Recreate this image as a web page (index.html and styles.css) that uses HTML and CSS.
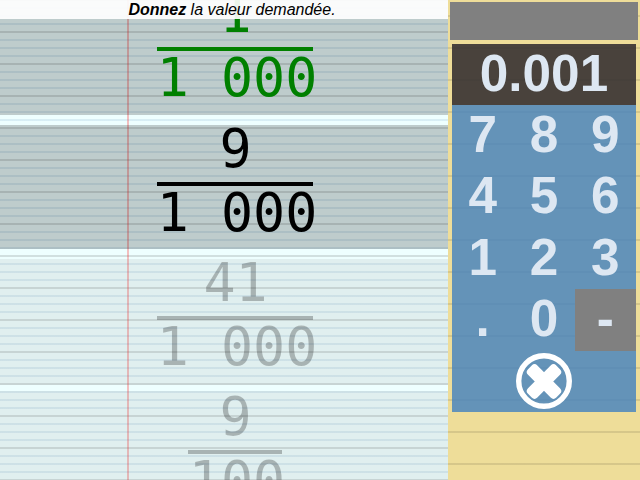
FILE: index.html
```html
<!DOCTYPE html>
<html lang="fr">
<head>
<meta charset="utf-8">
<title>Calcul</title>
<link rel="stylesheet" href="styles.css">
</head>
<body>
<main class="app">
  <section class="sheet">
    <header class="prompt"><b>Donnez</b>&nbsp;la valeur demandée.</header>
    <div class="cards">
      <article class="card first done"><div class="fraction"><span class="num">1</span><span class="bar"></span><span class="den">1 000</span></div></article>
      <article class="card second active"><div class="fraction"><span class="num">9</span><span class="bar"></span><span class="den">1 000</span></div></article>
      <article class="card third"><div class="fraction"><span class="num">41</span><span class="bar"></span><span class="den">1 000</span></div></article>
      <article class="card fourth"><div class="fraction"><span class="num">9</span><span class="bar short"></span><span class="den">100</span></div></article>
    </div>
  </section>
  <aside class="side">
    <div class="status"></div>
    <div class="keypad">
      <output class="display">0.001</output>
      <div class="keys">
        <span>7</span><span>8</span><span>9</span>
        <span>4</span><span>5</span><span>6</span>
        <span>1</span><span>2</span><span>3</span>
        <span>.</span><span>0</span><span class="disabled">-</span>
        <svg class="clear" viewBox="0 0 56 56"><circle cx="28" cy="28" r="25.3" fill="none" stroke="#fff" stroke-width="5.4"/><g fill="#fff" transform="translate(28 28.5)"><rect x="-20" y="-6.6" width="40" height="13.2" rx="4" transform="rotate(45)"/><rect x="-20" y="-6.6" width="40" height="13.2" rx="4" transform="rotate(-45)"/></g></svg>
      </div>
    </div>
  </aside>
</main>
</body>
</html>
```
FILE: styles.css
```css
* { box-sizing: border-box; }
body { margin: 0; overflow: hidden; }
.app { display: grid; grid-template-columns: 448px 192px; width: 640px; height: 480px; }
.sheet {
  height: 480px;
  overflow: hidden;
  background:
    linear-gradient(90deg, transparent 127px, rgba(255,0,0,.25) 127px, rgba(255,0,0,.25) 129px, transparent 129px),
    repeating-linear-gradient(transparent 0 7px, rgba(70,130,180,.13) 7px 9px, transparent 9px 15px, rgba(70,130,180,.13) 15px 17px, transparent 17px 23px, rgba(70,130,180,.13) 23px 25px, transparent 25px 31px, rgba(0,0,0,.12) 31px 32px),
    repeating-linear-gradient(rgba(0,0,0,.12) 0 1px, transparent 1px 32px),
    #eff;
}
.prompt {
  position: relative;
  z-index: 1;
  display: flex;
  justify-content: center;
  height: 19px;
  padding-left: 16px;
  font: italic 16px/19px "Liberation Sans", Arial, sans-serif;
  background: rgba(255,255,255,.92);
}
.cards { display: flex; flex-direction: column; height: 480px; margin-top: -19px; overflow: hidden; }
.card { flex: none; display: flex; justify-content: center; background: rgba(128,128,128,.13); color: rgba(0,0,0,.25); }
.first { height: 115px; margin-bottom: 10px; align-items: flex-end; padding-bottom: 8px; }
.second { height: 124px; margin-bottom: 10px; }
.third { height: 126px; margin-bottom: 6px; }
.fourth { height: 124px; padding-top: 2px; }
.done, .active { background: rgba(0,0,0,.2); }
.done { color: green; }
.active { color: #000; }
.fraction { display: flex; flex-direction: column; align-items: center; width: 160px; margin-left: 22px; font: 53.33px/62px "DejaVu Sans Mono", monospace; white-space: pre; }
.num { height: 57px; line-height: 48px; padding-left: 1px; }
.bar { width: 156px; height: 3.6px; background: currentColor; }
.bar.short { width: 94px; }
.den { height: 56.4px; line-height: 54px; padding-left: 4px; }
.side {
  padding: 2px;
  background: repeating-linear-gradient(transparent 0 15px, rgba(0,0,0,.1) 15px 17px, transparent 17px 32px), #ed9;
}
.status { height: 38px; background: gray; }
.keypad { margin: 4px 2px 0; font: bold 51.3px/59px "Liberation Sans", Arial, sans-serif; color: #dde7f2; text-align: center; }
.display { display: block; height: 61px; background: rgba(54,49,50,.9); }
.keys { display: grid; grid-template-columns: repeat(3, 1fr); grid-auto-rows: 61.4px; height: 307px; background: rgba(70,130,190,.82); }
.disabled { background: gray; }
.clear { grid-column: 1 / -1; justify-self: center; width: 56px; height: 56px; margin-top: 2.9px; }
```
